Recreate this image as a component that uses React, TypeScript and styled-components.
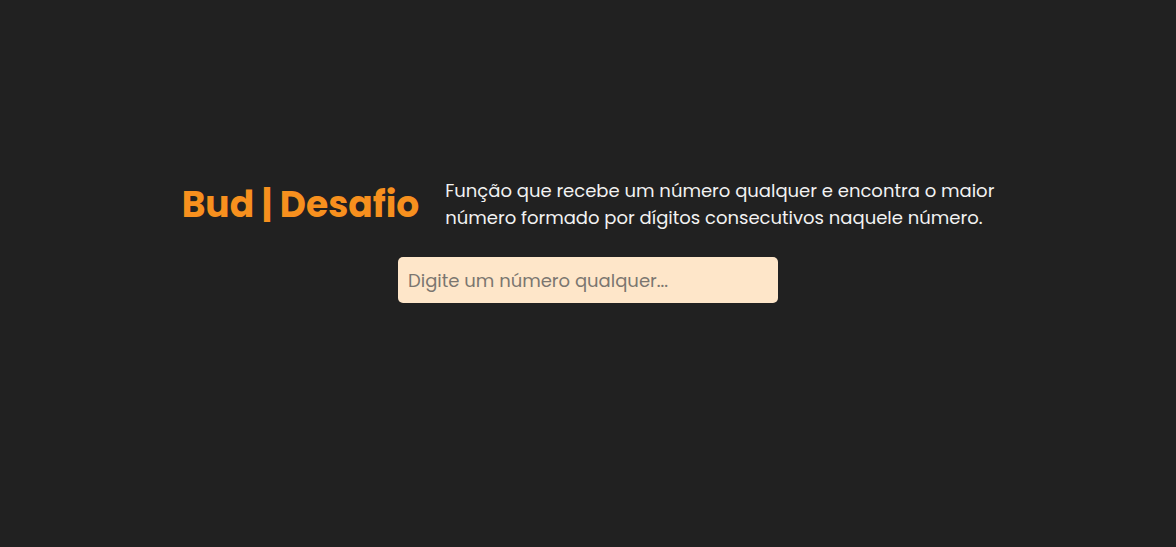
import { useState } from "react";
import styled, { createGlobalStyle } from "styled-components";

const GlobalStyle = createGlobalStyle`
  * {
    box-sizing: border-box;
  }

  body {
    margin: 0;
    background: #212121;
    font-family: "Poppins", "Open Sans", sans-serif;
  }
`;

const App = () => {
  const [value, setValue] = useState("");

  return (
    <>
      <GlobalStyle />
      <Page>
        <Header>
          <Title>Bud | Desafio</Title>
          <Description>
            Função que recebe um número qualquer e encontra o maior
            <br />
            número formado por dígitos consecutivos naquele número.
          </Description>
        </Header>
        <Input
          type="text"
          value={value}
          onChange={(e) => setValue(e.target.value)}
          placeholder="Digite um número qualquer..."
        />
      </Page>
    </>
  );
};

export default App;

const Page = styled.main`
  min-height: 547px;
  display: flex;
  flex-direction: column;
  align-items: center;
  padding-top: 177px;
`;

const Header = styled.header`
  display: flex;
  align-items: center;
  gap: 26px;
`;

const Title = styled.h1`
  margin: 0;
  font-size: 36px;
  line-height: 54px;
  font-weight: 700;
  color: #f7901e;
  white-space: nowrap;
  transform: translateY(1px);
`;

const Description = styled.p`
  margin: 0;
  font-size: 18px;
  line-height: 27px;
  color: #f2f2f2;
  white-space: nowrap;
`;

const Input = styled.input`
  margin-top: 26px;
  width: 380px;
  height: 46px;
  padding: 0 10px;
  border: none;
  border-radius: 5px;
  background: #fee6c9;
  font-family: inherit;
  font-size: 18px;
  color: #333;
  outline: none;

  &::placeholder {
    color: #7b7670;
  }
`;
